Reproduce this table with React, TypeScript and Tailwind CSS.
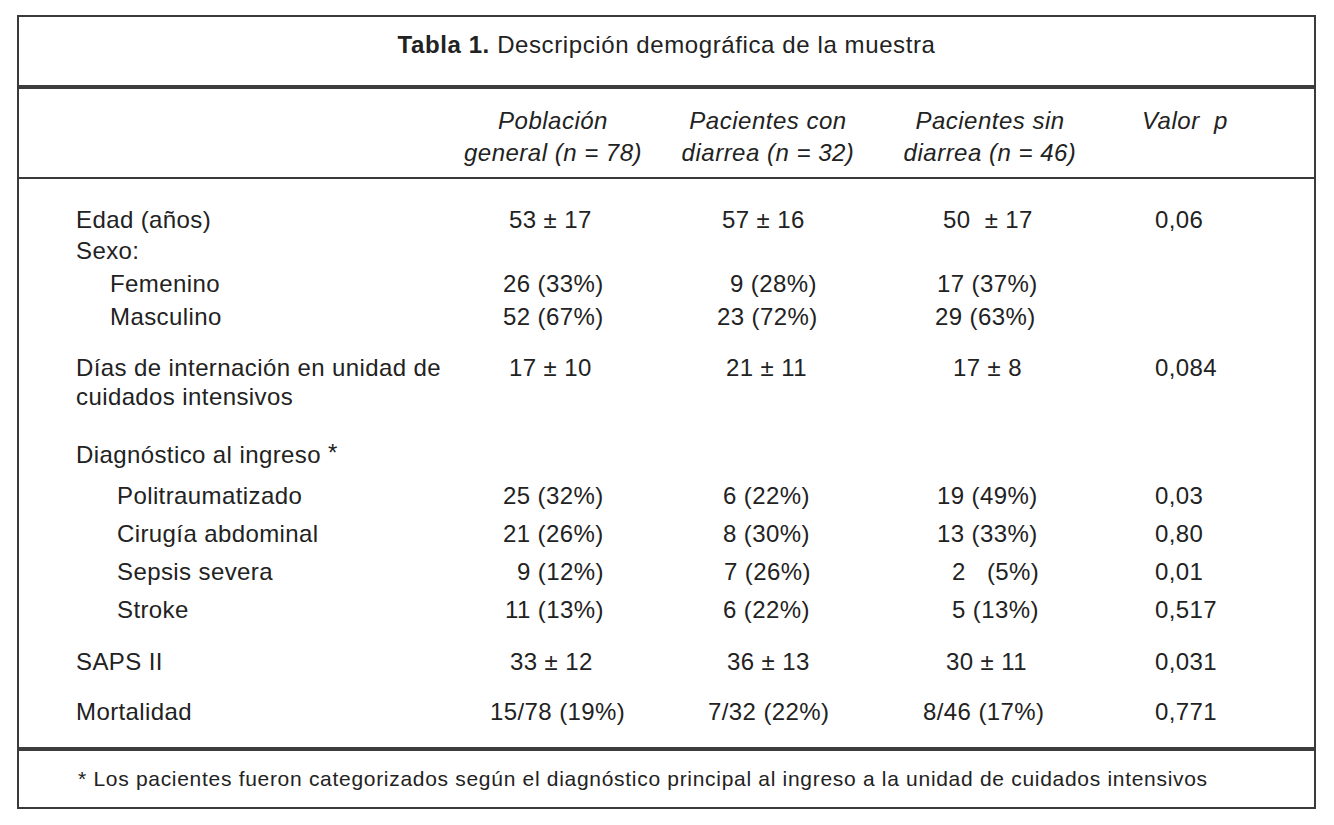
import React from "react";

type Cell = { t: string; c: string };
type Row = { label: string; lc: string; rc: string; cells: [Cell, Cell, Cell, Cell] };

const E: Cell = { t: "", c: "" };

const rows: Row[] = [
  { label: "Edad (años)", lc: "pl-[57px]", rc: "h-[31px]", cells: [{ t: "53 ± 17", c: "pl-[49px]" }, { t: "57 ± 16", c: "pl-[42px]" }, { t: "50  ± 17", c: "pl-[43px]" }, { t: "0,06", c: "pl-[35px]" }] },
  { label: "Sexo:", lc: "pl-[57px]", rc: "h-[31px]", cells: [E, E, E, E] },
  { label: "Femenino", lc: "pl-[91px]", rc: "h-[32px] mt-[2px]", cells: [{ t: "26 (33%)", c: "pl-[43px]" }, { t: "9 (28%)", c: "pl-[50px]" }, { t: "17 (37%)", c: "pl-[37px]" }, E] },
  { label: "Masculino", lc: "pl-[91px]", rc: "h-[34px]", cells: [{ t: "52 (67%)", c: "pl-[43px]" }, { t: "23 (72%)", c: "pl-[37px]" }, { t: "29 (63%)", c: "pl-[35px]" }, E] },
];

const rows2: Row[] = [
  { label: "Politraumatizado", lc: "pl-[98px]", rc: "h-[38px] mt-[6px]", cells: [{ t: "25 (32%)", c: "pl-[43px]" }, { t: "6 (22%)", c: "pl-[43px]" }, { t: "19 (49%)", c: "pl-[37px]" }, { t: "0,03", c: "pl-[35px]" }] },
  { label: "Cirugía abdominal", lc: "pl-[98px]", rc: "h-[38px]", cells: [{ t: "21 (26%)", c: "pl-[43px]" }, { t: "8 (30%)", c: "pl-[43px]" }, { t: "13 (33%)", c: "pl-[37px]" }, { t: "0,80", c: "pl-[35px]" }] },
  { label: "Sepsis severa", lc: "pl-[98px]", rc: "h-[38px]", cells: [{ t: "9 (12%)", c: "pl-[57px]" }, { t: "7 (26%)", c: "pl-[44px]" }, { t: "2   (5%)", c: "pl-[52px]" }, { t: "0,01", c: "pl-[35px]" }] },
  { label: "Stroke", lc: "pl-[98px]", rc: "h-[38px]", cells: [{ t: "11 (13%)", c: "pl-[45px]" }, { t: "6 (22%)", c: "pl-[43px]" }, { t: "5 (13%)", c: "pl-[52px]" }, { t: "0,517", c: "pl-[35px]" }] },
  { label: "SAPS II", lc: "pl-[57px]", rc: "h-[32px] mt-[17px]", cells: [{ t: "33 ± 12", c: "pl-[50px]" }, { t: "36 ± 13", c: "pl-[47px]" }, { t: "30 ± 11", c: "pl-[46px]" }, { t: "0,031", c: "pl-[35px]" }] },
  { label: "Mortalidad", lc: "pl-[57px]", rc: "h-[32px] mt-[18px]", cells: [{ t: "15/78 (19%)", c: "pl-[30px]" }, { t: "7/32 (22%)", c: "pl-[28px]" }, { t: "8/46 (17%)", c: "pl-[23px]" }, { t: "0,771", c: "pl-[35px]" }] },
];

function DataRow({ r }: { r: Row }) {
  return (
    <div className={`flex items-center whitespace-pre ${r.rc}`}>
      <div className={`w-[441px] ${r.lc}`}>{r.label}</div>
      <div className={`w-[220px] ${r.cells[0].c}`}>{r.cells[0].t}</div>
      <div className={`w-[220px] ${r.cells[1].c}`}>{r.cells[1].t}</div>
      <div className={`w-[220px] ${r.cells[2].c}`}>{r.cells[2].t}</div>
      <div className={`w-[190px] ${r.cells[3].c}`}>{r.cells[3].t}</div>
    </div>
  );
}

export default function App() {
  return (
    <div className="w-[1334px] h-[825px] bg-white font-['Liberation_Sans',Arial,sans-serif] text-[#222] pt-[15px] pl-[17px]">
      <div className="w-[1299px] border-2 border-[#3a3a3a]">
        {/* Title */}
        <div className="h-[72px] pt-[12px] border-b-[4px] border-[#3d3d3d] text-center text-[24px] leading-[32px] tracking-[0.6px]">
          <span className="font-bold">Tabla 1.</span> Descripción demográfica de la muestra
        </div>
        {/* Header */}
        <div className="h-[90px] pt-[16px] border-b-2 border-[#3a3a3a] flex italic text-[24px] leading-[32px] tracking-[0.5px]">
          <div className="w-[440px]" />
          <div className="w-[188px] text-center">
            Población
            <br />
            general (n = 78)
          </div>
          <div className="w-[31px]" />
          <div className="w-[180px] text-center">
            Pacientes con
            <br />
            diarrea (n = 32)
          </div>
          <div className="w-[42px]" />
          <div className="w-[180px] text-center">
            Pacientes sin
            <br />
            diarrea (n = 46)
          </div>
          <div className="w-[62px]" />
          <div className="whitespace-pre">Valor  p</div>
        </div>
        {/* Body */}
        <div className="pt-[25px] pb-[19px] border-b-[4px] border-[#3d3d3d] text-[24px] leading-[32px] tracking-[0.4px]">
          {rows.map((r) => (
            <DataRow key={r.label} r={r} />
          ))}
          <div className="flex items-start mt-[19px] h-[58px] leading-[29px]">
            <div className="w-[441px] pl-[57px]">
              Días de internación en unidad de
              <br />
              cuidados intensivos
            </div>
            <div className="w-[220px] pl-[49px]">17 ± 10</div>
            <div className="w-[220px] pl-[46px]">21 ± 11</div>
            <div className="w-[220px] pl-[53px]">17 ± 8</div>
            <div className="w-[190px] pl-[35px]">0,084</div>
          </div>
          <div className="flex items-center mt-[28px] h-[32px]">
            <div className="pl-[57px]">
              Diagnóstico al ingreso <span className="relative -top-[2px]">*</span>
            </div>
          </div>
          {rows2.map((r) => (
            <DataRow key={r.label} r={r} />
          ))}
        </div>
        {/* Footer */}
        <div className="h-[56px] pt-[12px] pl-[59px] text-[21px] leading-[32px] tracking-[0.7px]">
          * Los pacientes fueron categorizados según el diagnóstico principal al ingreso a la unidad de cuidados intensivos
        </div>
      </div>
    </div>
  );
}
